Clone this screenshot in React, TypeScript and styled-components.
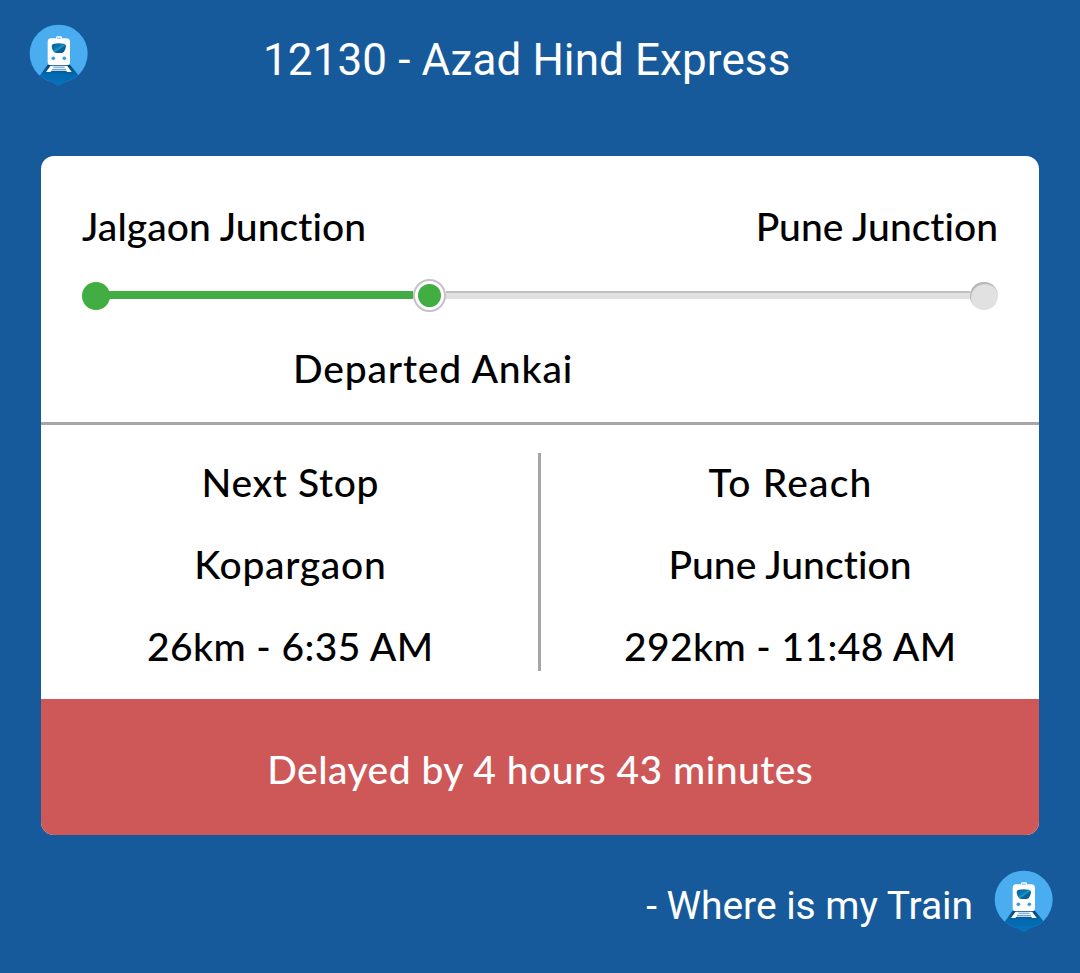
// 열차 실시간 위치를 공유하는 카드 컴포넌트

import styled, { createGlobalStyle } from "styled-components";

const GlobalStyle = createGlobalStyle`
  * {
    box-sizing: border-box;
  }
  body {
    margin: 0;
    background-color: #175a9b;
  }
`;

const Page = styled.main`
  width: 1080px;
  height: 973px;
  display: flex;
  flex-direction: column;
  background-color: #175a9b;
  font-family: Roboto, "Liberation Sans", sans-serif;
  color: white;
`;
const Header = styled.header`
  display: flex;
  align-items: flex-start;
  height: 156px;
  padding: 24px 0 0 29px;
`;
const Title = styled.h1`
  margin: 10px 0 0 175px;
  font-size: 44px;
  font-weight: 400;
  line-height: 52px;
  letter-spacing: 0.1px;
  white-space: nowrap;
`;
const Card = styled.section`
  display: flex;
  flex-direction: column;
  width: 998px;
  height: 679px;
  margin-left: 41px;
  border-radius: 13px;
  overflow: hidden;
  background-color: white;
  color: black;
`;
const Label = styled.span<{ $spacing?: number }>`
  font-family: Lato, "Open Sans", sans-serif;
  font-size: 39px;
  font-weight: 500;
  font-variant-ligatures: none;
  line-height: 48px;
  letter-spacing: ${({ $spacing = 0 }) => $spacing}px;
  margin-right: ${({ $spacing = 0 }) => -$spacing}px;
  white-space: nowrap;
`;
const Route = styled.div`
  height: 269px;
  padding: 46px 41px 0;
  border-bottom: 3px solid #a6a6a6;
`;
const Stations = styled.div`
  display: flex;
  justify-content: space-between;
`;
const Progress = styled.div`
  display: flex;
  align-items: center;
  height: 34px;
  margin-top: 29px;
`;
const StartDot = styled.div`
  width: 28px;
  height: 28px;
  border-radius: 50%;
  background-color: #41ad43;
`;
const DoneLine = styled.div`
  width: 305px;
  height: 8px;
  margin: -2px 0 0 -2px;
  background-color: #41ad43;
`;
const CurrentDot = styled.div`
  width: 33px;
  height: 33px;
  margin-top: -1px;
  padding: 3px;
  border: 2px solid #c4c1c8;
  border-radius: 50%;
  background-color: #41ad43;
  background-clip: content-box;
`;
const RestLine = styled.div`
  flex: 1;
  height: 8px;
  margin-top: -2px;
  background-color: #e1e1e1;
  border-top: 2px solid #c1c1c1;
`;
const EndDot = styled.div`
  width: 28px;
  height: 28px;
  border-radius: 50%;
  background-color: #e1e1e1;
  box-shadow: inset 1px 2px 1px #b4b4b4;
`;
const Status = styled.div`
  margin: 31px 0 0 211px;
`;
const Stops = styled.div`
  display: flex;
  height: 274px;
  align-items: flex-start;
`;
const Stop = styled.div`
  flex: 1;
  display: flex;
  flex-direction: column;
  align-items: center;
  gap: 34px;
  padding-top: 33px;
`;
const Divider = styled.div`
  width: 3px;
  height: 218px;
  margin: 28px 0 0 -1px;
  background-color: #a6a6a6;
`;
const Delay = styled.div`
  flex: 1;
  display: flex;
  justify-content: center;
  align-items: center;
  padding-top: 3px;
  background-color: #ce5758;
  color: white;
`;
const Footer = styled.footer`
  display: flex;
  justify-content: flex-end;
  padding: 35px 27px 0 0;
`;
const Signature = styled.span`
  margin: 12px 21px 0 0;
  font-size: 39px;
  line-height: 48px;
  letter-spacing: -0.05px;
  white-space: nowrap;
`;
const Logo = styled.svg`
  width: 59px;
  height: 62px;
  flex: none;
`;

const TrainLogo = ({ id }: { id: string }) => (
  <Logo viewBox="28 26 177 186">
    <defs>
      <clipPath id={id}>
        <circle cx="117" cy="115" r="87" />
      </clipPath>
      <linearGradient id={`${id}-pin`} x1="0" y1="0" x2="0" y2="1">
        <stop offset="0" stopColor="#064577" />
        <stop offset="0.45" stopColor="#0069b1" />
        <stop offset="1" stopColor="#0872bd" />
      </linearGradient>
      <linearGradient id={`${id}-glass`} x1="0" y1="0" x2="1" y2="1">
        <stop offset="0" stopColor="#075d94" />
        <stop offset="0.4" stopColor="#0d76b2" />
        <stop offset="0.55" stopColor="#1c9bc9" />
        <stop offset="0.6" stopColor="#0a659c" />
        <stop offset="1" stopColor="#075386" />
      </linearGradient>
    </defs>
    <circle cx="117" cy="115" r="87" fill="#49adf0" />
    <g clipPath={`url(#${id})`}>
      <path d="M84 148 58 184 80 215h75l24-32-28-35z" fill={`url(#${id}-pin)`} />
    </g>
    {/* 핀 아래쪽 꼭지 */}
    <path d="M88 195h59l-24 15q-6 3-12 0z" fill="#0870b9" />
    {/* 선로 */}
    <path d="M92 152h51l13 18h-13l-4-4H96l-4 4H79z" fill="white" />
    <path d="M101 155.500h34M97 162h42" stroke="#2d7fb8" strokeWidth="2.500" />
    {/* 열차 */}
    <path
      d="M94 69h15v-2q0-4 4-4h10q4 0 4 4v2h13q11 0 11 11v60q0 10-10 10H94q-10 0-10-10V80q0-11 10-11z"
      fill="white"
    />
    <path d="M112 67h11v3h-11z" fill="#6bb4e2" />
    <path
      d="M103 85q14-3 30 0 6 1 6 8-1 9-6 16-3 4-9 4h-13q-6 0-9-4-6-7-6-16 0-7 7-8z"
      fill={`url(#${id}-glass)`}
    />
    <circle cx="101" cy="129" r="5.500" fill="#3a9de0" />
    <circle cx="134" cy="129" r="5.500" fill="#3a9de0" />
  </Logo>
);

export default () => {
  return (
    <>
      <GlobalStyle />
      <Page>
        <Header>
          <TrainLogo id="top" />
          <Title>12130 - Azad Hind Express</Title>
        </Header>
        <Card>
          {/* 노선 진행 상황 */}
          <Route>
            <Stations>
              <Label $spacing={0.07}>Jalgaon Junction</Label>
              <Label>Pune Junction</Label>
            </Stations>
            <Progress>
              <StartDot />
              <DoneLine />
              <CurrentDot />
              <RestLine />
              <EndDot />
            </Progress>
            <Status>
              <Label $spacing={0.85}>Departed Ankai</Label>
            </Status>
          </Route>
          {/* 다음 역 / 도착 역 */}
          <Stops>
            <Stop>
              <Label $spacing={0.65}>Next Stop</Label>
              <Label $spacing={0.7}>Kopargaon</Label>
              <Label $spacing={0.4}>26km - 6:35 AM</Label>
            </Stop>
            <Divider />
            <Stop>
              <Label $spacing={1.2}>To Reach</Label>
              <Label $spacing={0.07}>Pune Junction</Label>
              <Label $spacing={0.4}>292km - 11:48 AM</Label>
            </Stop>
          </Stops>
          <Delay>
            <Label $spacing={0.48}>Delayed by 4 hours 43 minutes</Label>
          </Delay>
        </Card>
        <Footer>
          <Signature>- Where is my Train</Signature>
          <TrainLogo id="bottom" />
        </Footer>
      </Page>
    </>
  );
};
